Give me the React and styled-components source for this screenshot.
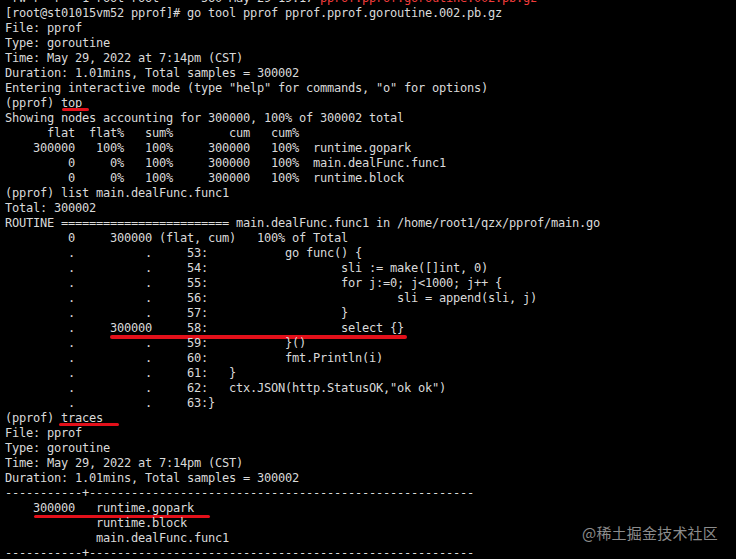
import React from "react";
import styled, { createGlobalStyle } from "styled-components";

const GlobalStyle = createGlobalStyle`
  html, body {
    margin: 0;
    padding: 0;
    background: #000;
  }
  #root {
    width: 736px;
    height: 559px;
    overflow: hidden;
  }
`;

const Screen = styled.div`
  position: relative;
  width: 736px;
  height: 559px;
  overflow: hidden;
  background-color: #000;
`;

const Terminal = styled.div`
  display: flex;
  flex-direction: column;
  margin-top: -9.5px;
  padding-left: 5px;
  font-family: "DejaVu Sans Mono", "Liberation Mono", monospace;
  font-size: 12px;
  letter-spacing: -0.224px;
  line-height: 15px;
  color: #dadada;
`;

const Line = styled.div`
  position: relative;
  height: 15px;
  white-space: pre;
`;

const Red = styled.span`
  color: #f03c3c;
`;

const Mark = styled.span`
  position: absolute;
  left: ${(p) => p.$left}px;
  top: ${(p) => p.$top}px;
  width: ${(p) => p.$width}px;
  height: ${(p) => p.$height}px;
  background-color: #e3101a;
  border-radius: 2px;
`;

const Watermark = styled.div`
  position: absolute;
  right: 18px;
  bottom: 17px;
  font-family: "Noto Sans CJK SC", "Noto Sans", sans-serif;
  font-size: 15px;
  line-height: 18px;
  color: #8c8c8c;
  letter-spacing: 0.2px;
`;

const row = (a, b, num, code) =>
  `         ${a}     ${b.padStart(6, " ")}     ${num}:${code}`;

const lines = [
  { text: "[root@st01015vm52 pprof]# go tool pprof pprof.pprof.goroutine.002.pb.gz" },
  { text: "File: pprof" },
  { text: "Type: goroutine" },
  { text: "Time: May 29, 2022 at 7:14pm (CST)" },
  { text: "Duration: 1.01mins, Total samples = 300002" },
  { text: 'Entering interactive mode (type "help" for commands, "o" for options)' },
  { text: "(pprof) top", mark: { left: 57, top: 12.5, width: 27, height: 2.5 } },
  { text: "Showing nodes accounting for 300000, 100% of 300002 total" },
  { text: "      flat  flat%   sum%        cum   cum%" },
  { text: "    300000   100%   100%     300000   100%  runtime.gopark" },
  { text: "         0     0%   100%     300000   100%  main.dealFunc.func1" },
  { text: "         0     0%   100%     300000   100%  runtime.block" },
  { text: "(pprof) list main.dealFunc.func1" },
  { text: "Total: 300002" },
  { text: "ROUTINE ======================== main.dealFunc.func1 in /home/root1/qzx/pprof/main.go" },
  { text: "         0     300000 (flat, cum)   100% of Total" },
  { text: row(".", ".", "53", "           go func() {") },
  { text: row(".", ".", "54", "                   sli := make([]int, 0)") },
  { text: row(".", ".", "55", "                   for j:=0; j<1000; j++ {") },
  { text: row(".", ".", "56", "                           sli = append(sli, j)") },
  { text: row(".", ".", "57", "                   }") },
  {
    text: row(".", "300000", "58", "                   select {}"),
    mark: { left: 105, top: 14.5, width: 297, height: 4 },
  },
  { text: row(".", ".", "59", "           }()") },
  { text: row(".", ".", "60", "           fmt.Println(i)") },
  { text: row(".", ".", "61", "   }") },
  { text: row(".", ".", "62", '   ctx.JSON(http.StatusOK,"ok ok")') },
  { text: row(".", ".", "63", "}") },
  { text: "(pprof) traces", mark: { left: 54, top: 12.3, width: 60, height: 3 } },
  { text: "File: pprof" },
  { text: "Type: goroutine" },
  { text: "Time: May 29, 2022 at 7:14pm (CST)" },
  { text: "Duration: 1.01mins, Total samples = 300002" },
  { text: "-----------+-------------------------------------------------------" },
  {
    text: "    300000   runtime.gopark",
    mark: { left: 29, top: 14.5, width: 176, height: 3 },
  },
  { text: "             runtime.block" },
  { text: "             main.dealFunc.func1" },
  { text: "-----------+-------------------------------------------------------" },
];

export default function App() {
  return (
    <Screen>
      <GlobalStyle />
      <Terminal>
        <Line>
          {"-rw-r--r-- 1 root root      560 May 29 19:17 "}
          <Red>pprof.pprof.goroutine.002.pb.gz</Red>
        </Line>
        {lines.map((l, i) => (
          <Line key={i}>
            {l.text}
            {l.mark && (
              <Mark
                $left={l.mark.left}
                $top={l.mark.top}
                $width={l.mark.width}
                $height={l.mark.height}
              />
            )}
          </Line>
        ))}
      </Terminal>
      <Watermark>@稀土掘金技术社区</Watermark>
    </Screen>
  );
}
